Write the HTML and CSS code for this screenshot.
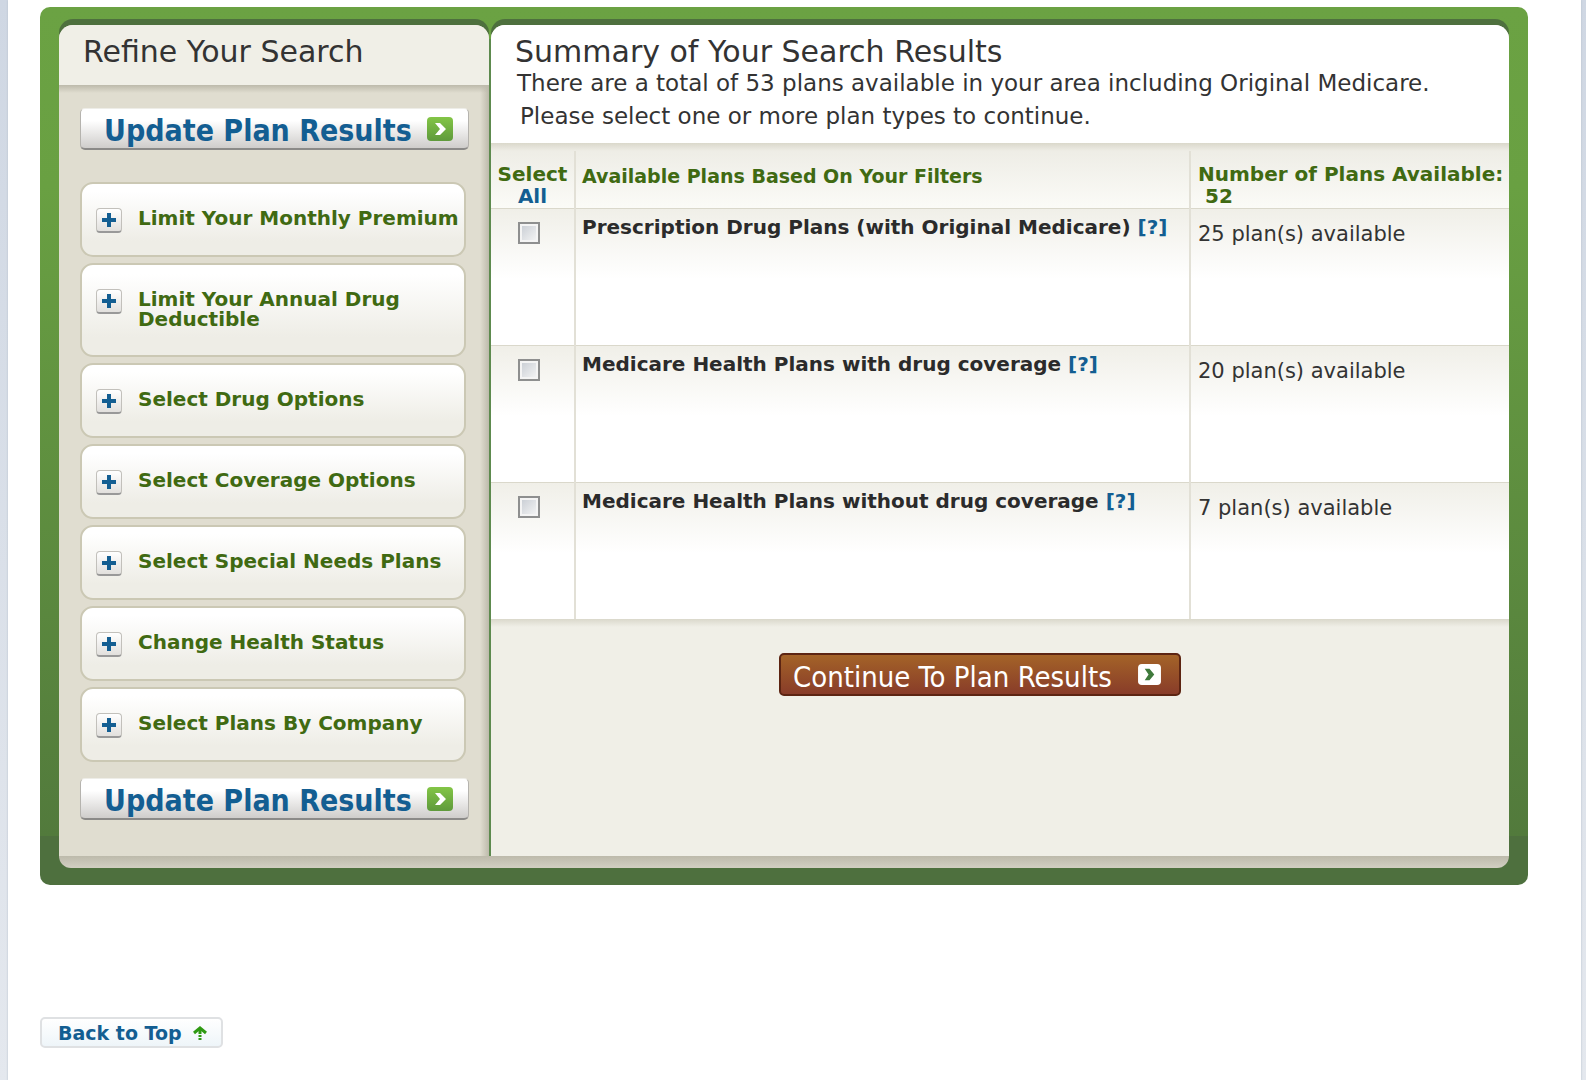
FILE: index.html
```html
<!DOCTYPE html>
<html lang="en">
<head>
    <meta charset="UTF-8">
    <meta name="viewport" content="width=device-width, initial-scale=1.0">
    <title>Summary of Your Search Results</title>
    <link rel="stylesheet" href="styles.css">
</head>
<body>
<div class="page" id="top">
    <form class="panel" action="#">
        <div class="columns">
            <aside class="sidebar">
                <h2 class="sidebar-title">Refine Your Search</h2>
                <div class="sidebar-body">
                    <button type="submit" class="update-button">
                        <span>Update Plan Results</span>
                        <svg class="go-icon" viewBox="0 0 26 24">
                            <defs>
                                <linearGradient id="go" x1="0" y1="0" x2="0" y2="1">
                                    <stop offset="0" stop-color="#83c546"/>
                                    <stop offset="1" stop-color="#5f9a3b"/>
                                </linearGradient>
                            </defs>
                            <rect width="26" height="24" rx="4" fill="url(#go)"/>
                            <path d="M8 6h5l6 6-6 6H8l5-6z" fill="#fff"/>
                        </svg>
                    </button>
                    <ul class="filters">
                        <li><button type="button" class="filter"><span class="plus"></span><span>Limit Your Monthly Premium</span></button></li>
                        <li><button type="button" class="filter"><span class="plus"></span><span>Limit Your Annual Drug Deductible</span></button></li>
                        <li><button type="button" class="filter"><span class="plus"></span><span>Select Drug Options</span></button></li>
                        <li><button type="button" class="filter"><span class="plus"></span><span>Select Coverage Options</span></button></li>
                        <li><button type="button" class="filter"><span class="plus"></span><span>Select Special Needs Plans</span></button></li>
                        <li><button type="button" class="filter"><span class="plus"></span><span>Change Health Status</span></button></li>
                        <li><button type="button" class="filter"><span class="plus"></span><span>Select Plans By Company</span></button></li>
                    </ul>
                    <button type="submit" class="update-button">
                        <span>Update Plan Results</span>
                        <svg class="go-icon" viewBox="0 0 26 24">
                            <rect width="26" height="24" rx="4" fill="url(#go)"/>
                            <path d="M8 6h5l6 6-6 6H8l5-6z" fill="#fff"/>
                        </svg>
                    </button>
                </div>
            </aside>
            <main class="results">
                <div class="summary">
                    <h1>Summary of Your Search Results</h1>
                    <p>There are a total of 53 plans available in your area including Original Medicare.</p>
                    <p class="hint">Please select one or more plan types to continue.</p>
                </div>
                <table class="plans">
                    <thead>
                        <tr>
                            <th class="col-select">Select <a href="#">All</a></th>
                            <th class="col-plan">Available Plans Based On Your Filters</th>
                            <th class="col-count">Number of Plans Available: <span class="total">52</span></th>
                        </tr>
                    </thead>
                    <tbody>
                        <tr>
                            <td class="col-select"><input type="checkbox" id="pdp"></td>
                            <td class="col-plan"><label for="pdp">Prescription Drug Plans (with Original Medicare)</label> <a href="#">[?]</a></td>
                            <td class="col-count">25 plan(s) available</td>
                        </tr>
                        <tr>
                            <td class="col-select"><input type="checkbox" id="mapd"></td>
                            <td class="col-plan"><label for="mapd">Medicare Health Plans with drug coverage</label> <a href="#">[?]</a></td>
                            <td class="col-count">20 plan(s) available</td>
                        </tr>
                        <tr>
                            <td class="col-select"><input type="checkbox" id="ma"></td>
                            <td class="col-plan"><label for="ma">Medicare Health Plans without drug coverage</label> <a href="#">[?]</a></td>
                            <td class="col-count">7 plan(s) available</td>
                        </tr>
                    </tbody>
                </table>
                <div class="actions">
                    <button type="submit" class="continue-button">
                        <span>Continue To Plan Results</span>
                        <svg class="continue-icon" viewBox="0 0 24 22">
                            <rect width="24" height="22" rx="4" fill="#fff"/>
                            <path d="M7 5h5l5 6-5 6H7l4-6z" fill="#3f7a3c"/>
                        </svg>
                    </button>
                </div>
            </main>
        </div>
        <div class="panel-foot"></div>
    </form>
    <a class="back-to-top" href="#top">
        <span>Back to Top</span>
        <svg class="up-icon" viewBox="0 0 14 14">
            <path d="M1 7l6-5 6 5" fill="none" stroke="#2f9a12" stroke-width="3"/>
            <path d="M7 2v12" stroke="#2f9a12" stroke-width="3" stroke-dasharray="6 1 2 1 2"/>
        </svg>
    </a>
</div>
</body>
</html>
```

FILE: styles.css
```css
* {
    box-sizing: border-box;
}
body {
    margin: 0;
    min-height: 100vh;
    display: flex;
    background: linear-gradient(#cfd7e3, #e4e8ee);
    color: #333;
    font-family: Verdana, "DejaVu Sans", sans-serif;
    font-size: 21px;
    line-height: 22px;
}
h1, h2, p, ul {
    margin: 0;
    padding: 0;
}
h1, h2 {
    font-size: 30px;
    font-weight: normal;
    line-height: 34px;
}
a {
    color: #135e92;
    text-decoration: none;
}
button {
    font-family: inherit;
    cursor: pointer;
}
.page {
    flex: 1;
    margin: 0 5px 0 8px;
    padding: 7px 53px 32px 32px;
    background: #fff;
    box-shadow: 0 0 2px #b4bfca;
    border-bottom: 1px solid #666;
}

/* green frame */
.panel {
    padding: 18px 19px 17px;
    border-radius: 10px;
    background: linear-gradient(#6ba243, #69a042 180px, #527a3c calc(100% - 49px), #4e703e calc(100% - 49px));
}
.columns {
    display: flex;
    gap: 2px;
    background: linear-gradient(transparent 14px, #5d8a4e 14px);
}
.sidebar, .results {
    border-radius: 14px 14px 0 0;
    box-shadow: 0 -6px 0 #4e703e;
}
.panel-foot {
    height: 12px;
    border-radius: 0 0 12px 12px;
    background: linear-gradient(#bdbaab, #d2cfc2);
}

/* sidebar */
.sidebar {
    flex: none;
    width: 430px;
    display: flex;
    flex-direction: column;
    background: #e0ddd0;
}
.sidebar-title {
    height: 60px;
    padding: 10px 24px;
    border-radius: 14px 14px 0 0;
    background: #f0efe7;
}
.sidebar-body {
    flex: 1;
    padding: 23px 20px 36px 21px;
    background:
        linear-gradient(#bdbaab, #e0ddd000) top / 100% 8px no-repeat,
        linear-gradient(to left, #bdbaab, #e0ddd000) right / 9px 100% no-repeat;
}
.update-button {
    display: flex;
    align-items: center;
    justify-content: space-between;
    width: 100%;
    height: 42px;
    padding: 0 15px 0 23px;
    border: 1px solid #b5b3ae;
    border-top-color: #eeede8;
    border-bottom: 2px solid #8b8a88;
    border-radius: 5px;
    background: linear-gradient(#fff 30%, #cfcdcb);
    color: #135e92;
    font-family: Tahoma, "DejaVu Sans Condensed", sans-serif;
    font-size: 30px;
    font-weight: bold;
    line-height: 34px;
    white-space: nowrap;
}
.update-button span, .continue-button span {
    padding-top: 5px;
}
.go-icon {
    width: 26px;
    height: 24px;
}
.filters {
    display: flex;
    flex-direction: column;
    gap: 6px;
    margin: 32px 3px 16px 0;
    list-style: none;
}
.filters li {
    display: flex;
}
.filter {
    display: flex;
    align-items: flex-start;
    gap: 16px;
    width: 100%;
    padding: 24px 0 26px 14px;
    border: 2px solid #cbc8b4;
    border-radius: 13px;
    background: linear-gradient(#fff 10%, #eeede6 80%);
    color: #406a12;
    font-size: 20px;
    font-weight: bold;
    line-height: 20px;
    text-align: left;
}
.plus {
    flex: none;
    width: 26px;
    height: 25px;
    margin-bottom: -4px;
    border: 1px solid #c2c0bb;
    border-bottom: 2px solid #999;
    border-radius: 4px;
    background:
        linear-gradient(#135e92, #135e92) center / 14px 4px no-repeat,
        linear-gradient(#135e92, #135e92) center / 4px 14px no-repeat,
        linear-gradient(#fff, #e2e0dd);
}

/* results */
.results {
    flex: 1;
    min-width: 0;
    background: #f0efe7;
}
.summary {
    padding: 10px 24px 21px;
    border-radius: 14px 14px 0 0;
    background: linear-gradient(#dad8cb, #eeede6) bottom / 100% 8px no-repeat, #fff;
}
.summary p {
    padding-left: 2px;
    font-size: 23px;
    line-height: 28px;
}
.summary .hint {
    padding: 5px 0 0 5px;
}
.plans {
    width: 100%;
    table-layout: fixed;
    border-collapse: collapse;
    background: #fff;
}
.plans th, .plans td {
    border-left: 2px solid #e2e0d6;
    text-align: left;
    vertical-align: top;
}
.plans th {
    height: 57px;
    padding: 12px 0 0 7px;
    color: #406a12;
    font-size: 20px;
}
.plans td {
    height: 137px;
}
.plans .col-select {
    width: 84px;
    border-left: 0;
    text-align: center;
}
.plans .col-count {
    width: 319px;
}
.plans th.col-plan {
    padding: 14px 0 0 6px;
    font-size: 19px;
}
.plans th.col-select {
    padding: 12px 0 0;
}
.plans td.col-select {
    padding: 13px 7px 0 0;
}
.plans td.col-plan {
    padding: 7px 0 7px 6px;
    color: #2b2b2b;
    font-size: 20px;
    font-weight: bold;
}
.plans td.col-count {
    padding: 14px 0 14px 7px;
}
.plans thead tr {
    background: linear-gradient(#eeede6, #fbfbf7);
}
.plans tbody tr {
    border-top: 1px solid #dad8cb;
    background: linear-gradient(#f0efe8, #fff 70px);
}
.plans th a {
    display: block;
}
.total {
    display: block;
    padding-left: 7px;
}
.plans input {
    appearance: none;
    width: 22px;
    height: 22px;
    margin: 0;
    border: 2px solid #8e8f8f;
    background: linear-gradient(135deg, #c6cbd2, #f7f7f7);
    box-shadow: inset 0 0 0 2px #f4f4f4;
}
.actions {
    padding: 34px 40px 0 0;
    background: linear-gradient(#dad8cb, #f0efe7) top / 100% 8px no-repeat;
    text-align: center;
}
.continue-button {
    display: inline-flex;
    align-items: center;
    justify-content: space-between;
    width: 402px;
    height: 43px;
    padding: 0 18px 0 12px;
    border: 2px solid #5c2412;
    border-radius: 5px;
    background: linear-gradient(#a46328, #883c29);
    color: #fff;
    font-family: Tahoma, "DejaVu Sans Condensed", sans-serif;
    font-size: 29px;
    line-height: 34px;
    white-space: nowrap;
}
.continue-icon {
    width: 23px;
    height: 21px;
}

.back-to-top {
    display: inline-flex;
    align-items: center;
    gap: 11px;
    height: 31px;
    margin-top: 132px;
    padding: 0 14px 0 16px;
    border: 2px solid #dfe1e3;
    border-radius: 5px;
    background: linear-gradient(#fff, #eef5f9);
    font-size: 19px;
    font-weight: bold;
}
.up-icon {
    width: 14px;
    height: 14px;
}
```
